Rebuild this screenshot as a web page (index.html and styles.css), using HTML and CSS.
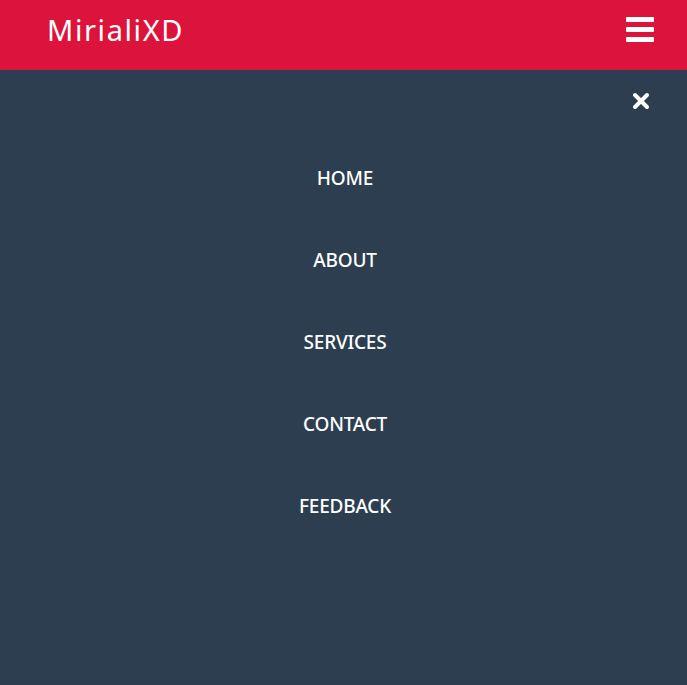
FILE: index.html
```html
<!DOCTYPE html>
<html>
<head>
<meta charset="utf-8">
<link rel="stylesheet" href="styles.css">
</head>
<body>
<header class="topbar">
  <div class="logo">MirialiXD</div>
  <button class="burger" aria-label="Menu">
    <span></span><span></span><span></span>
  </button>
</header>
<nav class="menu">
  <div class="close-row">
    <svg class="close" width="18" height="18" viewBox="0 0 18 18">
      <path d="M3 3 L15 15 M15 3 L3 15" stroke="#fff" stroke-width="4" stroke-linecap="round"/>
    </svg>
  </div>
  <ul class="links">
    <li><a href="#">HOME</a></li>
    <li><a href="#">ABOUT</a></li>
    <li><a href="#">SERVICES</a></li>
    <li><a href="#">CONTACT</a></li>
    <li><a href="#">FEEDBACK</a></li>
  </ul>
</nav>
</body>
</html>
```
FILE: styles.css
```css
html, body {
  margin: 0;
  padding: 0;
  height: 100%;
}
body {
  background: #2c3e50;
  font-family: "Open Sans", "Noto Sans", sans-serif;
  display: flex;
  flex-direction: column;
}
.topbar {
  height: 70px;
  background: #dc143c;
  display: flex;
  align-items: center;
  justify-content: space-between;
  padding: 0 33px 0 47px;
  box-sizing: border-box;
}
.logo {
  color: #fff;
  font-size: 29px;
  font-family: "Noto Sans", "Open Sans", sans-serif;
  letter-spacing: 1.6px;
  margin-top: -12px;
}
.burger {
  background: none;
  border: 0;
  padding: 0;
  width: 28px;
  display: flex;
  flex-direction: column;
  gap: 5px;
  margin-top: -12px;
}
.burger span {
  display: block;
  height: 5px;
  background: #fff;
  border-radius: 1px;
}
.menu {
  flex: 1;
  background: #2c3e50;
}
.close-row {
  display: flex;
  justify-content: flex-end;
  padding: 22px 37px 0 0;
}
.close {
  display: block;
}
.links {
  list-style: none;
  margin: 0;
  padding: 54px 0 0;
  display: flex;
  flex-direction: column;
  align-items: center;
  gap: 54px;
}
.links li {
  height: 28px;
  display: flex;
  align-items: center;
}
.links a {
  color: #fff;
  text-decoration: none;
  font-family: "Noto Sans", sans-serif;
  font-weight: 500;
  font-size: 19px;
  letter-spacing: -0.2px;
  margin-left: 3px;
}
```
